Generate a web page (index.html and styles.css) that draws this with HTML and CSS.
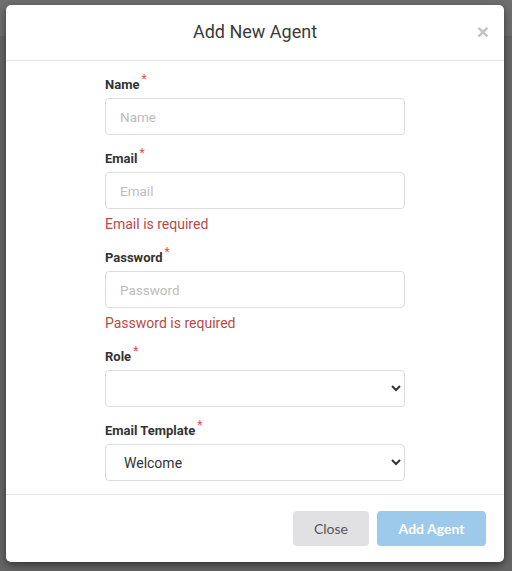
FILE: index.html
```html
<!DOCTYPE html>
<html>
<head>
<meta charset="utf-8">
<link rel="stylesheet" href="styles.css">
</head>
<body>
<div class="backdrop">
  <div class="backdrop-top"></div>
  <div class="modal">
    <div class="modal-header">
      <h4 class="modal-title">Add New Agent</h4>
      <span class="close-x">×</span>
    </div>
    <div class="modal-body">
      <form class="form">
        <div class="group">
          <label class="label">Name<span class="req">*</span></label>
          <input class="input" type="text" placeholder="Name">
        </div>
        <div class="group">
          <label class="label">Email<span class="req">*</span></label>
          <input class="input" type="text" placeholder="Email">
          <div class="error">Email is required</div>
        </div>
        <div class="group">
          <label class="label">Password<span class="req">*</span></label>
          <input class="input" type="password" placeholder="Password">
          <div class="error">Password is required</div>
        </div>
        <div class="group">
          <label class="label">Role<span class="req">*</span></label>
          <select class="input select"><option></option></select>
        </div>
        <div class="group last">
          <label class="label">Email Template<span class="req">*</span></label>
          <select class="input select"><option>Welcome</option></select>
        </div>
      </form>
    </div>
    <div class="modal-footer">
      <button class="btn btn-close" type="button">Close</button>
      <button class="btn btn-primary" type="button">Add Agent</button>
    </div>
  </div>
</div>
</body>
</html>
```

FILE: styles.css
```css
html, body {
  margin: 0;
  padding: 0;
  width: 512px;
  height: 571px;
  overflow: hidden;
  font-family: Roboto, "Liberation Sans", Arial, sans-serif;
}
.backdrop {
  position: relative;
  width: 512px;
  height: 571px;
  background: #666666;
  padding-top: 5px;
  box-sizing: border-box;
}
.backdrop-top {
  position: absolute;
  left: 0;
  top: 0;
  width: 512px;
  height: 36px;
  background: #6f6f6f;
  border-bottom: 1px solid #646464;
}
.modal {
  position: relative;
  margin-left: 6px;
  width: 498px;
  background: #fff;
  border-radius: 5px;
  box-shadow: 0 3px 9px rgba(0, 0, 0, 0.5);
  display: flex;
  flex-direction: column;
}
.modal-header {
  height: 55px;
  border-bottom: 1px solid #e5e5e5;
  display: flex;
  align-items: center;
  justify-content: center;
  position: relative;
}
.modal-title {
  margin: 0;
  font-weight: 400;
  font-size: 18px;
  color: #3a3a3a;
  margin-top: -2px;
}
.close-x {
  position: absolute;
  right: 15px;
  top: 16px;
  font-size: 21px;
  font-weight: 700;
  color: #c2c2c2;
  line-height: 1;
  font-family: "Liberation Sans", Arial, sans-serif;
}
.modal-body {
  padding: 13px 0 13px;
}
.form {
  width: 300px;
  margin: 0 auto;
}
.group {
  display: flex;
  flex-direction: column;
  margin-bottom: 13px;
}
.group.last {
  margin-bottom: 0;
}
.label {
  box-sizing: border-box;
  font-size: 13px;
  font-weight: 700;
  color: #333;
  line-height: 18px;
  height: 18px;
  padding-top: 2px;
  margin-bottom: 6px;
  display: block;
}
.req {
  color: #e34c4c;
  font-size: 12px;
  font-weight: 400;
  position: relative;
  top: -6px;
  margin-left: 2px;
}
.input {
  box-sizing: border-box;
  width: 300px;
  height: 37px;
  border: 1px solid #dcdcdc;
  border-radius: 4px;
  padding: 0 14px;
  font-family: Roboto, "Liberation Sans", Arial, sans-serif;
  font-size: 13.5px;
  color: #444;
  background: #fff;
  outline: none;
  margin: 0;
}
.input::placeholder {
  color: #bdbdbd;
}
.select {
  padding: 0 4px 0 14px;
  color: #333;
  font-size: 14px;
  height: 37px;
}
.error {
  color: #b94a48;
  font-size: 14px;
  line-height: 20px;
  margin-top: 5px;
}
.modal-footer {
  border-top: 1px solid #e5e5e5;
  padding: 16px 18px 16px;
  display: flex;
  justify-content: flex-end;
  gap: 8px;
}
.btn {
  height: 35px;
  border: none;
  border-radius: 4px;
  font-family: Lato, "Open Sans", sans-serif;
  font-size: 14px;
  padding: 0;
  margin: 0;
}
.btn-close {
  width: 76px;
  background: #e1e1e3;
  color: #555;
}
.btn-primary {
  width: 109px;
  background: #9dcaeb;
  color: #fff;
  font-weight: 700;
}
```
